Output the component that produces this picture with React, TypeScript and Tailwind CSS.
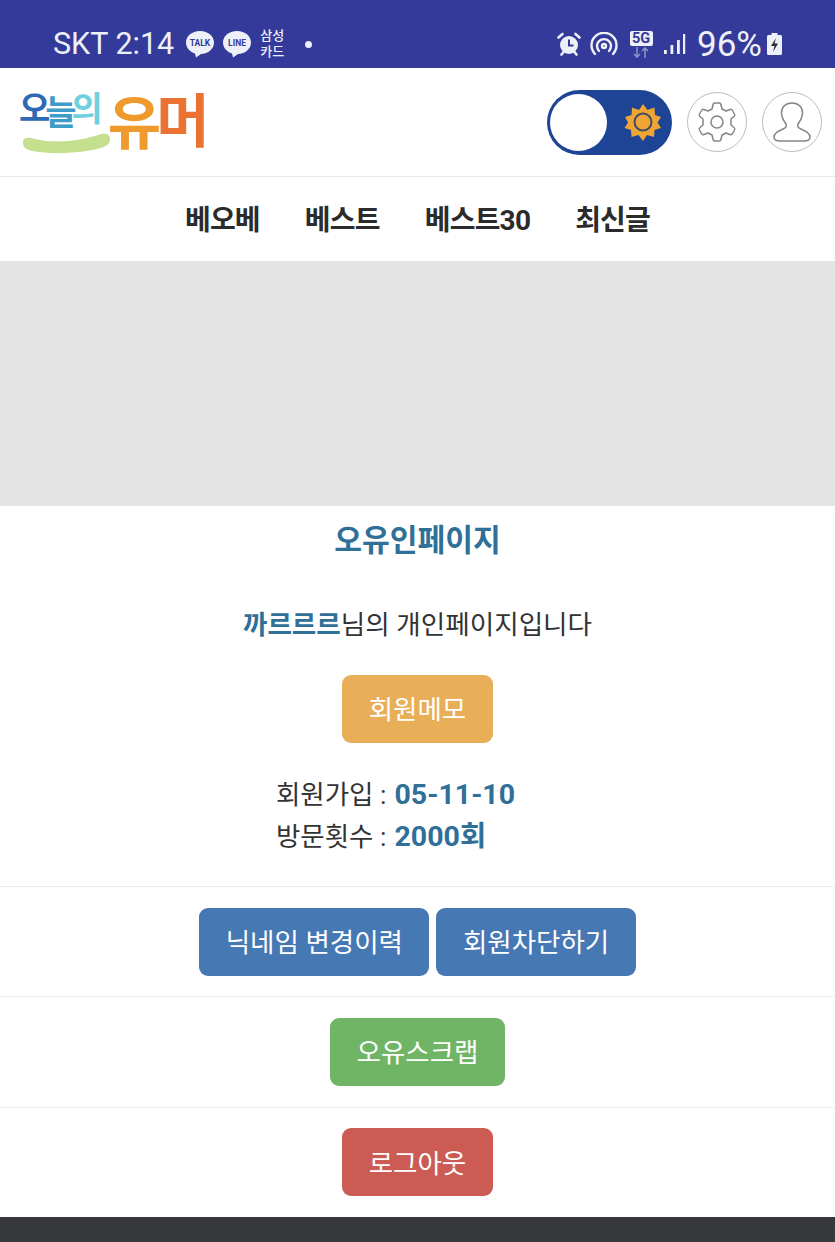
const font = "font-['Roboto','Noto_Sans_CJK_KR',sans-serif]";

const BubbleIcon = ({ label, size }: { label: string; size: number }) => (
  <svg width="30" height="28" viewBox="0 0 30 28">
    <path d="M15 1C7 1 1 6 1 12.500c0 5 3.500 9 9 11l1 4 5-3.500c7.500-.2 13-5.300 13-11.500C29 6 23 1 15 1z" fill="#eef0f8" />
    <text x="15" y="16" textAnchor="middle" fontSize={size} fontWeight="700" fontFamily="Roboto" fill="#343a9a">
      {label}
    </text>
  </svg>
);

const AlarmIcon = () => (
  <svg width="24" height="24" viewBox="0 0 24 24">
    <circle cx="12" cy="13" r="9" fill="#eef0f8" />
    <path d="M1.500 5.500l4-3.500M22.500 5.500l-4-3.500" stroke="#eef0f8" strokeWidth="2.600" strokeLinecap="round" />
    <path d="M4.500 22.500l2.500-3M19.500 22.500l-2.500-3" stroke="#eef0f8" strokeWidth="2.600" strokeLinecap="round" />
    <path d="M12 7.500v6h4.500" stroke="#343a9a" strokeWidth="2" fill="none" />
  </svg>
);

const HotspotIcon = () => (
  <svg width="28" height="24" viewBox="0 0 28 24" fill="none" stroke="#eef0f8" strokeWidth="2.400" strokeLinecap="round">
    <path d="M5 22A12.500 12.500 0 1 1 23 22" />
    <path d="M9 19a7 7 0 1 1 10 0" />
    <circle cx="14" cy="14" r="2" />
  </svg>
);

const FiveGIcon = () => (
  <div className="flex flex-col items-center gap-[1px] w-[24px]">
    <div className="bg-[#eef0f8] text-[#343a9a] text-[14.500px] leading-[15px] font-bold w-[23px] text-center rounded-[2px] font-['Roboto',sans-serif]">
      5G
    </div>
    <svg width="20" height="11" viewBox="0 0 20 11" fill="none" stroke="#8f94cc" strokeWidth="1.500">
      <path d="M6 0v10M3 7l3 3 3-3M14 11V1M11 4l3-3 3 3" />
    </svg>
  </div>
);

const SignalIcon = () => (
  <svg width="22" height="22" viewBox="0 0 22 22" fill="#eef0f8">
    <rect x="0" y="17" width="2.800" height="4" />
    <rect x="6.500" y="12" width="2.800" height="9" />
    <rect x="13" y="7" width="2.800" height="14" />
    <rect x="19" y="1" width="2.200" height="20" />
  </svg>
);

const BatteryIcon = () => (
  <svg width="17" height="24" viewBox="0 0 16 24">
    <path d="M5 1h6v2h3a1.500 1.500 0 0 1 1.500 1.500v17A1.500 1.500 0 0 1 14 23H2a1.500 1.500 0 0 1-1.500-1.500v-17A1.500 1.500 0 0 1 2 3h3z" fill="#eef0f8" />
    <path d="M9.500 6L4.500 14H8l-1.500 6 5-8.500H8z" fill="#2a2a33" />
  </svg>
);

const StatusBar = () => (
  <div className={`h-[68px] bg-[#343a9a] flex items-center justify-between pt-[20px] pl-[53px] pr-[52px] text-[#eef0f8] ${font}`}>
    <div className="flex items-center">
      <span className="text-[30.500px] leading-none">SKT 2:14</span>
      <div className="ml-[11px] flex items-center gap-[7px]">
        <BubbleIcon label="TALK" size={8.500} />
        <BubbleIcon label="LINE" size={8.500} />
      </div>
      <div className="ml-[7px] w-[26px] text-center text-[13px] leading-[16px] font-medium">
        삼성
        <br />
        카드
      </div>
      <span className="ml-[20px] w-[7px] h-[7px] rounded-full bg-[#eef0f8]" />
    </div>
    <div className="flex items-center">
      <AlarmIcon />
      <div className="ml-[9px]">
        <HotspotIcon />
      </div>
      <div className="ml-[11px]">
        <FiveGIcon />
      </div>
      <div className="ml-[11px]">
        <SignalIcon />
      </div>
      <span className="ml-[11px] text-[35px] leading-none">96%</span>
      <div className="ml-[4px]">
        <BatteryIcon />
      </div>
    </div>
  </div>
);

const Logo = () => (
  <div className="relative w-[186px] h-[68px] font-['Noto_Sans_CJK_KR',sans-serif] flex items-start whitespace-nowrap">
    <svg className="absolute left-[2px] top-[44px]" width="92" height="24" viewBox="0 0 92 24">
      <path d="M2 10C2 5 8 5 14 7c21 5 46 2 66-5 6-2 10 2 9 7-1 5-9 8-24 10-25 4-55 2-61-3-2-2-2-4-2-6z" fill="#c4e08e" />
    </svg>
    <div className="relative shrink-0 text-[34px] leading-[44px] tracking-[-5px] mt-[-3px] font-bold">
      <span className="text-[#2f68b4]">오</span>
      <span className="inline-block translate-y-[4px] text-[#3f9cc8]">늘</span>
      <span className="text-[#6fd0de]">의</span>
    </div>
    <div className="relative shrink-0 text-[58px] leading-[64px] tracking-[-5px] mt-[-3px] ml-[10px] font-bold">
      <span className="inline-block translate-y-[2px] text-[#ef9a2c]">유</span>
      <span className="text-[#ea7233]">머</span>
    </div>
  </div>
);

const Toggle = () => (
  <div className="w-[125px] h-[65px] rounded-full bg-[#1e4595] flex items-center justify-between pl-[3px] pr-[10px]">
    <div className="w-[57px] h-[57px] rounded-full bg-white" />
    <svg width="38" height="38" viewBox="0 0 38 38">
      <path
        d="M19 1l4.500 6 7-2.500.5 7.500 6 2-3.500 5.500 3.500 5.500-6.500 2-.5 7-7-2-4 6-4.500-6-7 2-.5-7-6.500-2 3.500-5.500L1 14l6.500-2 .5-7.500 7 2.500z"
        fill="#eea533"
      />
      <circle cx="19" cy="19" r="8.500" fill="#eea533" stroke="#3f4a66" strokeWidth="2" />
    </svg>
  </div>
);

const GearButton = () => (
  <div className="w-[60px] h-[60px] rounded-full border-[1.5px] border-[#bdbdbd] flex items-center justify-center">
    <svg width="42" height="42" viewBox="0 0 42 42" fill="none" stroke="#858585" strokeWidth="1.500" strokeLinejoin="round">
      <path d="M17 4c0-1 1-2 2-2h4c1 0 2 1 2 2l1 4 4 2 4-1.500c1-.4 2 0 2.500 1l2 3.500c.5 1 .2 2-.5 2.500L35 18v6l3 2.500c.7.500 1 1.500.5 2.500l-2 3.500c-.5 1-1.500 1.400-2.500 1L30 32l-4 2-1 4c0 1-1 2-2 2h-4c-1 0-2-1-2-2l-1-4-4-2-4 1.500c-1 .4-2 0-2.500-1l-2-3.500c-.5-1-.2-2 .5-2.500L7 24v-6l-3-2.500c-.7-.500-1-1.500-.5-2.500l2-3.500c.5-1 1.500-1.400 2.500-1L12 10l4-2z" />
      <circle cx="21" cy="21" r="6" />
    </svg>
  </div>
);

const UserButton = () => (
  <div className="w-[60px] h-[60px] rounded-full border-[1.5px] border-[#bdbdbd] flex items-center justify-center">
    <svg width="38" height="42" viewBox="0 0 38 42" fill="none" stroke="#858585" strokeWidth="1.500">
      <path d="M19 2c6.500 0 10.500 4 10.500 10 0 5-2.500 8-4.500 11-1 2 0 4 3 5 5 2 9 4 9 8 0 3-3 4-6 4H7c-3 0-6-1-6-4 0-4 4-6 9-8 3-1 4-3 3-5-2-3-4.500-6-4.500-11C8.500 6 12.500 2 19 2z" />
    </svg>
  </div>
);

const Header = () => (
  <div className="h-[109px] border-b border-[#e8e8e8] flex items-center justify-between pl-[19px] pr-[13px]">
    <Logo />
    <div className="flex items-center gap-[15px]">
      <Toggle />
      <GearButton />
      <UserButton />
    </div>
  </div>
);

const navItems = ["베오베", "베스트", "베스트30", "최신글"];

const Nav = () => (
  <div className="h-[84px] flex items-center justify-center gap-[45px] pt-[3px]">
    {navItems.map((item) => (
      <span key={item} className="text-[28px] leading-none font-bold text-[#2b2b2b] tracking-[-0.8px]">
        {item}
      </span>
    ))}
  </div>
);

const ActionButton = ({ label, color }: { label: string; color: string }) => (
  <div className={`h-[68px] px-[26.500px] pt-[3px] rounded-[9px] flex items-center text-white text-[26.500px] leading-none ${color}`}>
    {label}
  </div>
);

const Row = ({ children }: { children: React.ReactNode }) => (
  <div className="border-t border-[#ececec] pt-[20.500px] pb-[20.900px] flex justify-center gap-[7px]">{children}</div>
);

export default function App() {
  return (
    <div className={`w-[835px] h-[1242px] overflow-hidden bg-white flex flex-col ${font}`}>
      <StatusBar />
      <Header />
      <Nav />
      <div className="h-[245px] bg-[#e4e4e4]" />
      <div className="flex flex-col items-center pt-[15px] pb-[28px] text-[#333]">
        <h1 className="text-[30.200px] leading-[40px] font-bold text-[#2f6f98]">오유인페이지</h1>
        <p className="mt-[44px] text-[26.600px] leading-[40px]">
          <span className="font-bold text-[#2f6f98]">까르르르</span>님의 개인페이지입니다
        </p>
        <div className="mt-[30px]">
          <ActionButton label="회원메모" color="bg-[#e9ae58]" />
        </div>
        <div className="mt-[31px] mr-[44px] text-[26.500px] leading-[42px]">
          <p>
            회원가입 : <span className="ml-[1.500px] font-bold text-[28.500px] text-[#2f6f98]">05-11-10</span>
          </p>
          <p>
            방문횟수 : <span className="ml-[1.500px] font-bold text-[28.500px] text-[#2f6f98]">2000회</span>
          </p>
        </div>
      </div>
      <Row>
        <ActionButton label="닉네임 변경이력" color="bg-[#4678b4]" />
        <ActionButton label="회원차단하기" color="bg-[#4678b4]" />
      </Row>
      <Row>
        <ActionButton label="오유스크랩" color="bg-[#70b566]" />
      </Row>
      <Row>
        <ActionButton label="로그아웃" color="bg-[#cc5b54]" />
      </Row>
      <div className="flex-1 bg-[#37383c]" />
    </div>
  );
}
